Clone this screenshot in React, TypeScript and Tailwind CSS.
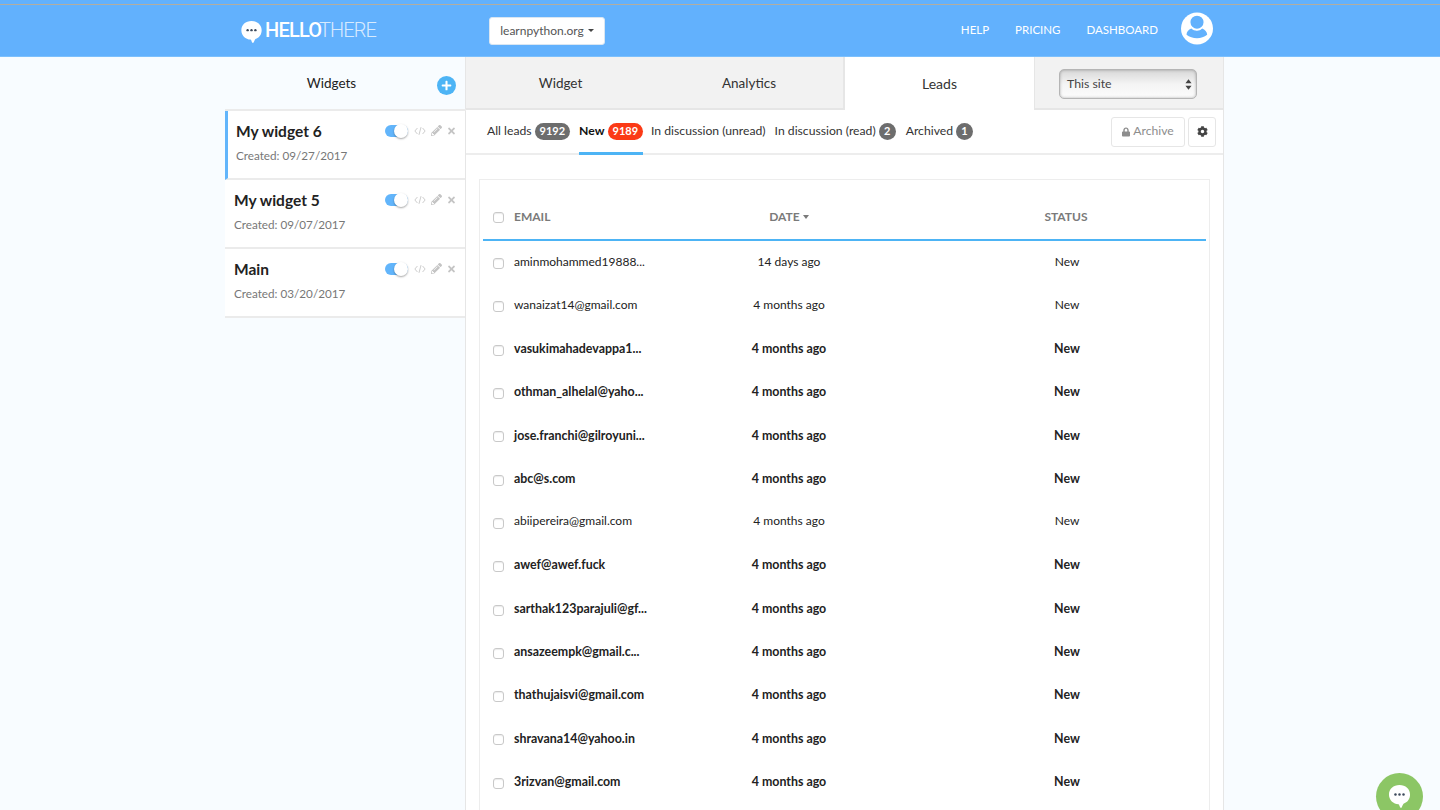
import React from "react";
import { FaCog, FaLock, FaPencilAlt, FaTimes, FaPlus } from "react-icons/fa";

const font = "font-['Lato','Liberation_Sans',sans-serif]";

function Bubble({ className, dot }: { className?: string; dot: string }) {
  return (
    <svg viewBox="0 0 24 26" className={className}>
      <path d="M12 1C5.600 1 1 5.200 1 11s4.600 10 10 10.200c.8 0 1.300 3.800 2.600 3.800 1 0 1.400-3 2.600-4.400C20.300 19.200 23 15.800 23 11 23 5.200 18.400 1 12 1z" fill="#fff" />
      <circle cx="7.800" cy="11" r="1.300" fill={dot} />
      <circle cx="12" cy="11" r="1.300" fill={dot} />
      <circle cx="16.200" cy="11" r="1.300" fill={dot} />
    </svg>
  );
}

function Toggle() {
  return (
    <span className="relative block w-[23px] h-[12px] mt-px rounded-full bg-[#62b5fb]">
      <span className="absolute right-0 top-[-1px] w-[14px] h-[14px] rounded-full bg-white shadow-[0_1px_2px_rgba(0,0,0,0.35)]" />
    </span>
  );
}

function WidgetCard({ name, date, active }: { name: string; date: string; active?: boolean }) {
  return (
    <div className={`h-[69px] border-b-2 border-[#ebebeb] bg-white flex justify-between ${active ? "border-l-[3px] border-l-[#62b5fb] pl-[8px]" : "pl-[9px]"} pr-[9px]`}>
      <div className="pt-[10px]">
        <div className="text-[15.500px] leading-[20px] font-bold text-[#222]">{name}</div>
        <div className="text-[11.700px] leading-[16px] mt-[6px] text-[#777]">Created: {date}</div>
      </div>
      <div className="flex items-start gap-[5px] pt-[13px] text-[#c4c4c4]">
        <Toggle />
        <svg viewBox="0 0 14 10" className="w-[12px] h-[10px] mt-[2px] ml-px" fill="none" stroke="#c4c4c4" strokeWidth="1">
          <path d="M4 1.500 1 5l3 3.500M10 1.500 13 5l-3 3.500M8.200.5 5.800 9.500" />
        </svg>
        <FaPencilAlt className="w-[11px] h-[11px] mt-[1px]" />
        <FaTimes className="w-[9px] h-[10px] mt-[2px]" />
      </div>
    </div>
  );
}

function Check({ low }: { low?: boolean }) {
  return <span className={`block w-[11px] h-[11px] ${low ? "mt-[4px]" : "mt-[2px]"} rounded-[3px] border border-[#c9c9c9] bg-white shadow-[inset_0_1px_1px_rgba(0,0,0,0.08)]`} />;
}

function Badge({ n, red }: { n: string; red?: boolean }) {
  return (
    <span className={`ml-[3px] inline-flex items-center justify-center h-[17px] min-w-[17px] px-[5px] rounded-full text-[11px] font-bold text-white ${red ? "bg-[#fb3a16]" : "bg-[#6d6d6d]"}`}>{n}</span>
  );
}

const rows: [string, string, boolean][] = [
  ["aminmohammed19888...", "14 days ago", false],
  ["wanaizat14@gmail.com", "4 months ago", false],
  ["vasukimahadevappa1...", "4 months ago", true],
  ["othman_alhelal@yaho...", "4 months ago", true],
  ["jose.franchi@gilroyuni...", "4 months ago", true],
  ["abc@s.com", "4 months ago", true],
  ["abiipereira@gmail.com", "4 months ago", false],
  ["awef@awef.fuck", "4 months ago", true],
  ["sarthak123parajuli@gf...", "4 months ago", true],
  ["ansazeempk@gmail.c...", "4 months ago", true],
  ["thathujaisvi@gmail.com", "4 months ago", true],
  ["shravana14@yahoo.in", "4 months ago", true],
  ["3rizvan@gmail.com", "4 months ago", true],
];

const grid = "grid grid-cols-[172px_268px_1fr] items-center";

export default function App() {
  return (
    <div className={`relative h-[810px] w-[1440px] overflow-hidden bg-[#f8fcff] text-[12px] text-[#333] ${font}`}>
      <header className="h-[57px] bg-[#62b1fd] border-b border-[#7cc0fd] relative">
        <div className="absolute inset-x-0 top-[4px] h-px bg-[#b3ad9f]" />
        <div className="w-[990px] mx-auto h-full flex items-center pt-[4px] pl-[15px] pr-[2px]">
          <Bubble className="w-[23px] h-[24px] mt-[3px]" dot="#3d4a5c" />
          <div className="ml-[2px] w-[224px] text-[20px] text-white font-['Roboto',sans-serif] leading-none flex">
            <span className="font-medium tracking-[-0.8px] w-[54px]">HELLO</span>
            <span className="font-light text-white/75 tracking-[-0.9px]">THERE</span>
          </div>
          <button className="h-[28px] mt-[1px] w-[116px] rounded-[3px] bg-white text-[12px] text-[#555] border border-[#d9e6f2] flex items-center justify-center gap-[4px]">
            learnpython.org
            <span className="w-0 h-0 border-x-[3.500px] border-x-transparent border-t-[3.500px] border-t-[#444]" />
          </button>
          <nav className="ml-auto flex items-center gap-[26px] text-[11.500px] text-white">
            <span>HELP</span>
            <span>PRICING</span>
            <span>DASHBOARD</span>
          </nav>
          <svg viewBox="0 0 33 33" className="ml-[23px] -mt-[3px] w-[32px] h-[33px]">
            <circle cx="16.500" cy="16.500" r="16.500" fill="#fff" />
            <path d="M5.700 23c0-3 2-5.500 5-6.500 3 3 8.500 3 11 0 3 1 5.300 3.500 5.300 6.500-3 2.500-6.500 3.500-10.500 3.500s-8-1-10.800-3.500z" fill="#62b1fd" />
            <circle cx="16.500" cy="10" r="7.500" fill="#62b1fd" stroke="#fff" strokeWidth="1.500" />
          </svg>
        </div>
      </header>

      <div className="w-[999px] ml-[225px] flex">
        <aside className="w-[241px] shrink-0">
          <div className="h-[54px] relative flex items-center justify-center pr-[28px] text-[13.500px] text-[#222] border-b-2 border-[#ebebeb]">
            Widgets
            <span className="absolute right-[10px] top-[19px] w-[19px] h-[19px] rounded-full bg-[#4db4f5] flex items-center justify-center text-white">
              <FaPlus className="w-[11px] h-[11px]" />
            </span>
          </div>
          <div className="mr-px">
            <WidgetCard name="My widget 6" date="09/27/2017" active />
            <WidgetCard name="My widget 5" date="09/07/2017" />
            <WidgetCard name="Main" date="03/20/2017" />
          </div>
        </aside>

        <main className="w-[758px] h-[753px] bg-white border-x border-[#e6e6e6] box-content -ml-px">
          <div className="h-[53px] flex text-[13.500px]">
            <div className="w-[189px] flex items-center justify-center pt-[2px] bg-[#f2f2f2] border-b-2 border-[#e6e6e6]">Widget</div>
            <div className="w-[190px] flex items-center justify-center pt-[2px] bg-[#f2f2f2] border-b-2 border-r-2 border-[#e6e6e6]">Analytics</div>
            <div className="w-[189px] flex items-center justify-center bg-white text-[14px]">Leads</div>
            <div className="flex-1 flex items-center justify-center bg-[#f2f2f2] border-b-2 border-l border-[#e6e6e6] pr-[2px] pt-[3px]">
              <div className="w-[138px] h-[30px] rounded-[5px] border border-[#b5b5b5] bg-gradient-to-b from-[#d8d8d8] via-[#f4f4f4] to-[#fcfcfc] shadow-[inset_0_0_3px_rgba(0,0,0,0.3)] flex items-center justify-between pl-[7px] pr-[4px] text-[12.300px] text-[#444]">
                This site
                <svg viewBox="0 0 8 12" className="w-[7px] h-[11px]"><path d="M4 0l3.500 4.500h-7zM4 12 .5 7.500h7z" fill="#444" /></svg>
              </div>
            </div>
          </div>

          <div className="h-[45px] flex items-center pl-[21px] pr-[7px] border-b-2 border-[#ededed] text-[12.200px] text-[#333]">
            <div className="flex items-center h-full">
              <span className="flex items-center">All leads<Badge n="9192" /></span>
              <span className="relative ml-[9px] h-full flex items-center font-bold text-[#111]">
                New<Badge n="9189" red />
                <span className="absolute left-0 right-0 bottom-[-2px] h-[3px] bg-[#4db4f5]" />
              </span>
              <span className="ml-[8px]">In discussion (unread)</span>
              <span className="ml-[9px] flex items-center">In discussion (read)<Badge n="2" /></span>
              <span className="ml-[10px] flex items-center">Archived<Badge n="1" /></span>
            </div>
            <div className="ml-auto flex gap-[3px]">
              <button className="w-[74px] h-[30px] rounded-[3px] border border-[#e6e6e6] flex items-center justify-center gap-[3px] text-[#8d8d8d]">
                <FaLock className="w-[8px] h-[10px]" /> Archive
              </button>
              <button className="w-[28px] h-[30px] rounded-[3px] border border-[#e6e6e6] flex items-center justify-center text-[#444]">
                <FaCog className="w-[11px] h-[11px]" />
              </button>
            </div>
          </div>

          <div className="px-[13px] pt-[24px]">
            <section className="border border-[#ededed] px-[3px] h-[700px]">
              <div className={`${grid} h-[61px] border-b-2 border-[#4db4f5] text-[12px] font-bold text-[#7a7a7a] pt-[14px]`}>
                <div className="flex items-center gap-[10px] pl-[10px]"><Check />EMAIL</div>
                <div className="flex items-center justify-center gap-[3px]">DATE<span className="w-0 h-0 border-x-[3.500px] border-x-transparent border-t-[4px] border-t-[#7a7a7a]" /></div>
                <div className="text-center pl-[3px]">STATUS</div>
              </div>
              {rows.map(([email, date, bold]) => (
                <div key={email} className={`${grid} h-[43.300px] text-[#222] ${bold ? "font-bold text-[12.400px]" : "text-[12px] pb-[2px]"}`}>
                  <div className="flex items-center gap-[10px] pl-[10px] whitespace-nowrap"><Check low={!bold} />{email}</div>
                  <div className="text-center">{date}</div>
                  <div className="text-center pl-[5px]">New</div>
                </div>
              ))}
            </section>
          </div>
        </main>
      </div>

      <div className="absolute left-[1376px] top-[773px] w-[47px] h-[47px] rounded-full bg-[#8cc665] flex items-center justify-center">
        <Bubble className="w-[23px] h-[25px]" dot="#3d4a5c" />
      </div>
    </div>
  );
}
